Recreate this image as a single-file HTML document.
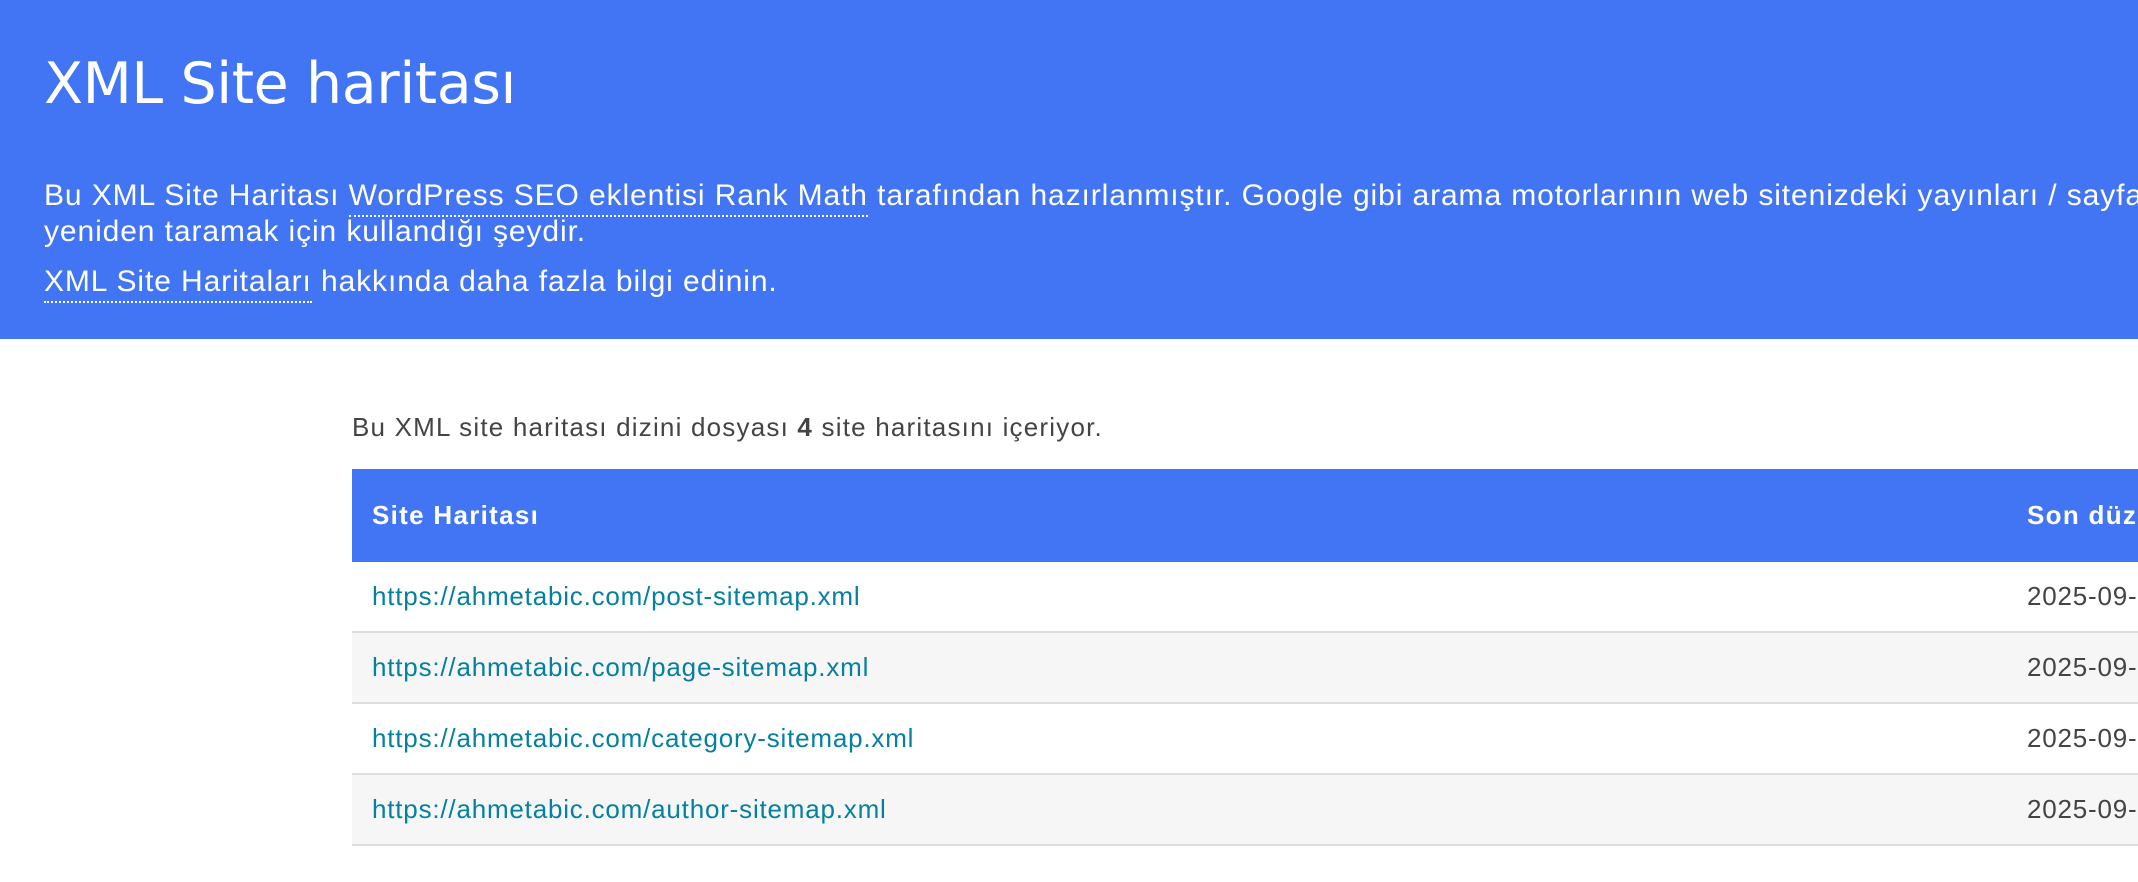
<!DOCTYPE html>
<html><head><meta charset="utf-8"><style>
html,body{margin:0;padding:0;width:2138px;height:882px;overflow:hidden;background:#fff;font-family:"Liberation Sans",Arial,sans-serif}
#hd{position:absolute;left:0;top:0;width:2138px;height:339px;background:#4275f4;color:#fff}
h1{position:absolute;left:44px;top:49px;margin:0;font-family:"DejaVu Sans",sans-serif;font-weight:normal;font-size:57px;line-height:70px;white-space:nowrap;letter-spacing:-0.4px}
.p{position:absolute;left:44px;font-size:30px;line-height:36px;white-space:nowrap;letter-spacing:0.9px}
.p a{color:#fff;text-decoration:none;border-bottom:2px dotted #fff;padding-bottom:3px}
#intro{position:absolute;left:352px;top:412px;font-size:26px;color:#444;white-space:nowrap;letter-spacing:1.2px}
table{position:absolute;left:352px;top:469px;border-collapse:collapse;width:2400px;font-size:26px;letter-spacing:0.8px}
th{background:#4275f4;color:#fff;text-align:left;height:93px;padding:0 20px;font-weight:bold;letter-spacing:1.3px}
td{height:69px;padding:0 20px;border-bottom:2px solid #ddd;color:#444}
tr.a td{background:#f6f6f6}
td a{color:#05809e;text-decoration:none}
</style></head><body>
<div id="hd">
<h1>XML Site haritası</h1>
<div class="p" style="top:178px">Bu XML Site Haritası <a>WordPress SEO eklentisi Rank Math</a> tarafından hazırlanmıştır. Google gibi arama motorlarının web sitenizdeki yayınları / sayfaları ve</div>
<div class="p" style="top:214px">yeniden taramak için kullandığı şeydir.</div>
<div class="p" style="top:264px"><a>XML Site Haritaları</a> hakkında daha fazla bilgi edinin.</div>
</div>
<div id="intro">Bu XML site haritası dizini dosyası <b>4</b> site haritasını içeriyor.</div>
<table>
<tr><th style="width:1615px">Site Haritası</th><th>Son düzenleme</th></tr>
<tr><td><a>https://ahmetabic.com/post-sitemap.xml</a></td><td>2025-09-01 10:00 +00:00</td></tr>
<tr class="a"><td><a>https://ahmetabic.com/page-sitemap.xml</a></td><td>2025-09-01 10:00 +00:00</td></tr>
<tr><td><a>https://ahmetabic.com/category-sitemap.xml</a></td><td>2025-09-01 10:00 +00:00</td></tr>
<tr class="a"><td><a>https://ahmetabic.com/author-sitemap.xml</a></td><td>2025-09-01 10:00 +00:00</td></tr>
</table>
</body></html>
